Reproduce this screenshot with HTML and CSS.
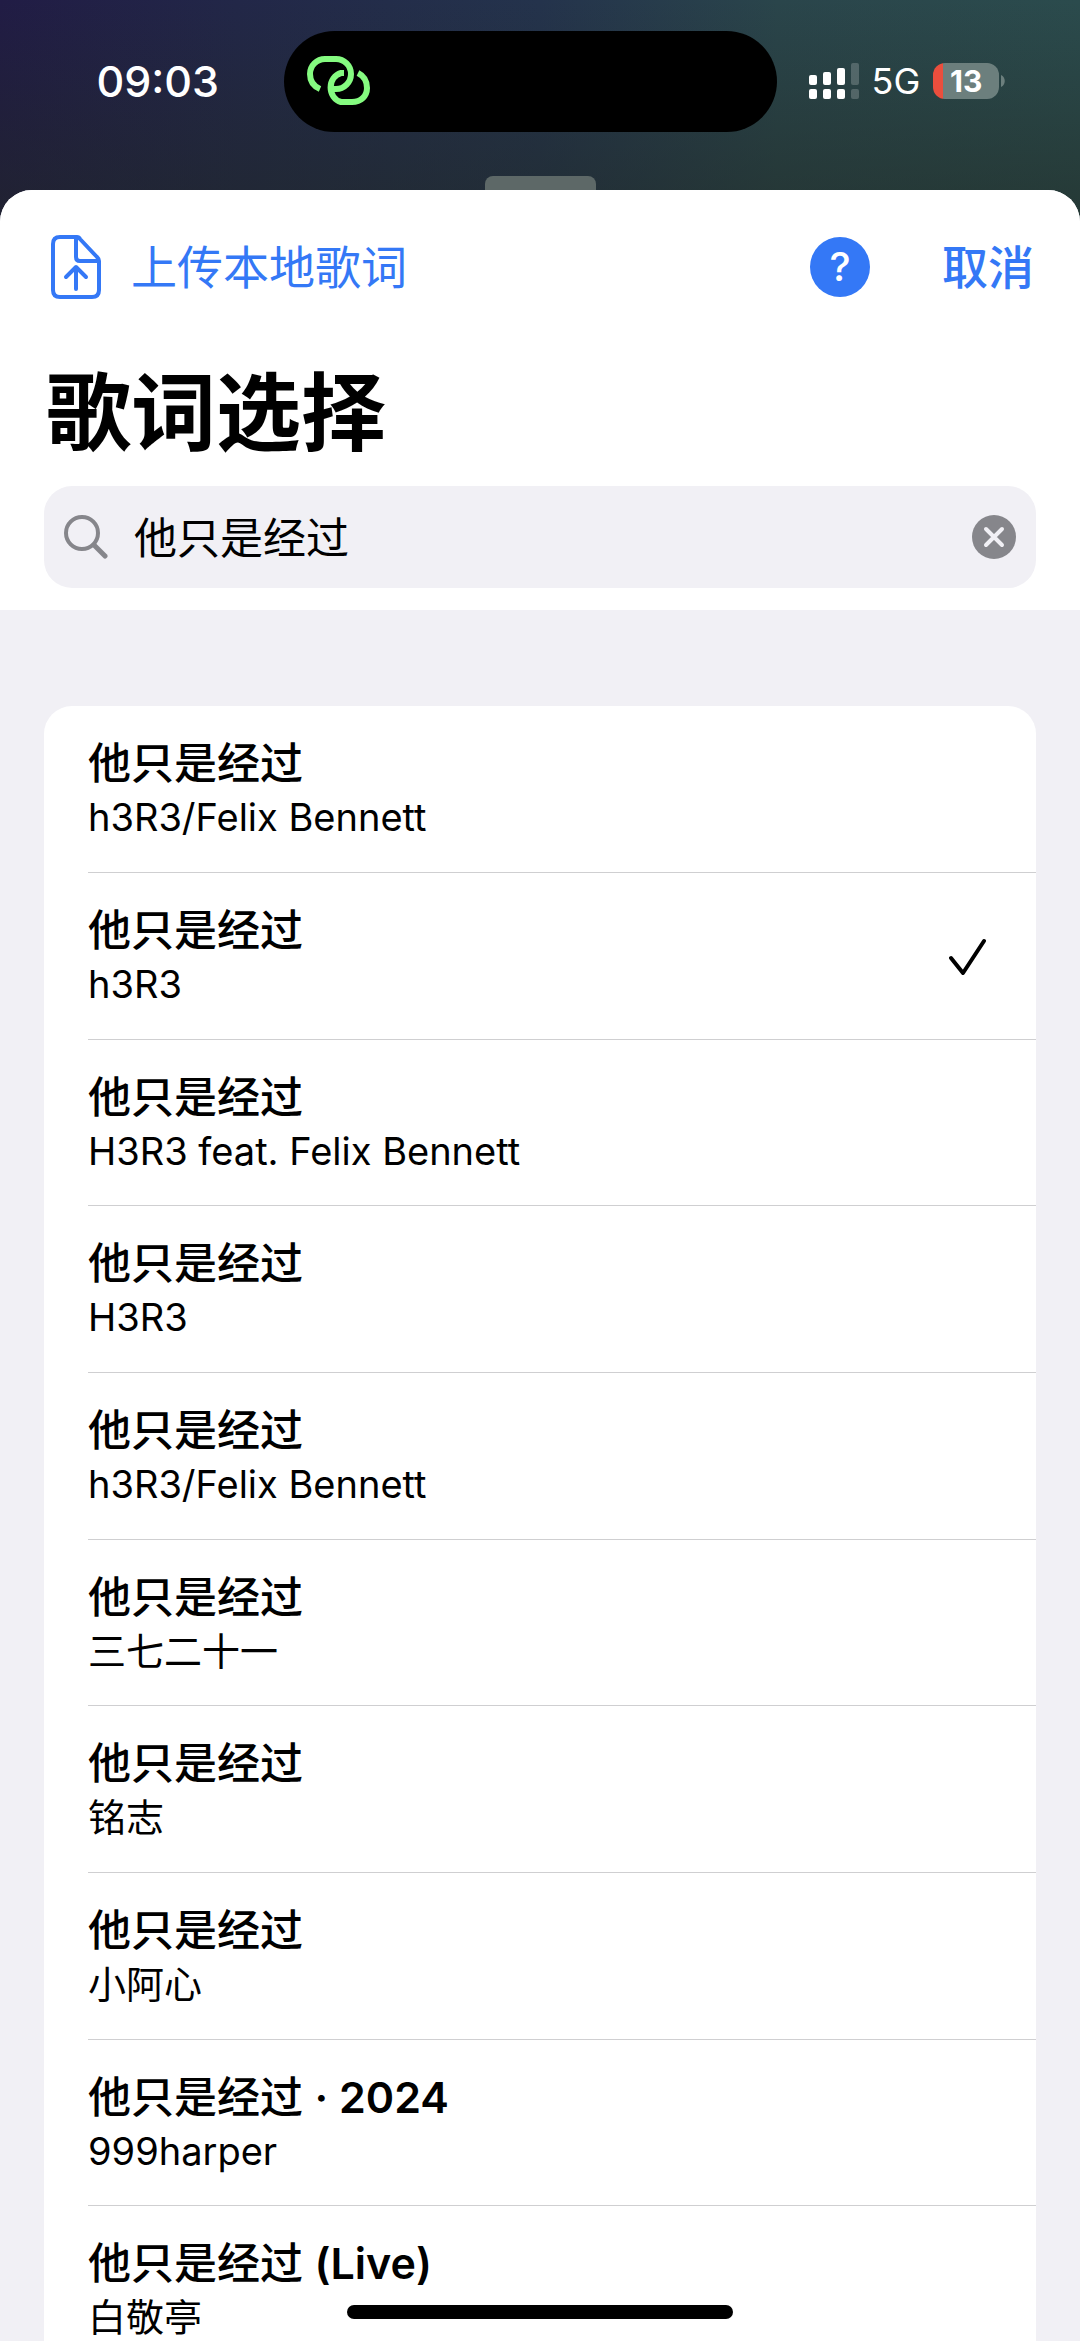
FILE: index.html
```html
<!DOCTYPE html>
<html lang="zh-CN">
<head>
    <meta charset="UTF-8">
    <meta name="viewport" content="width=device-width, initial-scale=1.0">
    <title>歌词选择</title>
    <link rel="stylesheet" href="styles.css">
</head>
<body>
    <div class="status-bar">
        <div class="time">09:03</div>
        <div class="island">
            <svg width="64" height="50" viewBox="0 0 64 50" fill="none" stroke="#85fb80" stroke-width="6">
                <path d="M13 33C6 30 3 24 3 18A15 15 0 0 1 18 3H29A15 15 0 0 1 29 33H26"/>
                <path d="M37 17H34A14 15 0 0 0 34 46H45C54 46 60 40 60 32C60 25 57 20 51 17"/>
            </svg>
        </div>
        <div class="status-right">
            <svg width="50" height="36" viewBox="0 0 50 36" fill="#fff">
                <rect x="0" y="12" width="8" height="10" rx="2"/>
                <rect x="14" y="9" width="8" height="13" rx="2"/>
                <rect x="28" y="5" width="8" height="17" rx="2"/>
                <rect x="42" y="0" width="8" height="22" rx="2" opacity="0.2"/>
                <rect x="0" y="26" width="8" height="10" rx="2"/>
                <rect x="14" y="26" width="8" height="10" rx="2"/>
                <rect x="28" y="26" width="8" height="10" rx="2"/>
                <rect x="42" y="26" width="8" height="10" rx="2" opacity="0.2"/>
            </svg>
            <span class="network">5G</span>
            <div class="battery">13</div>
            <svg class="battery-tip" width="4" height="12" viewBox="0 0 4 12" fill="#6c7f7d">
                <path d="M0 0C5 2 5 10 0 12Z"/>
            </svg>
        </div>
    </div>
    <div class="grabber"></div>

    <main class="sheet">
        <header class="sheet-header">
            <div class="toolbar">
                <button class="upload" type="button">
                    <svg width="50" height="64" viewBox="0 0 50 64" fill="none" stroke="currentColor" stroke-width="4" stroke-linecap="round" stroke-linejoin="round">
                        <path d="M26 2H9Q2 2 2 9V55Q2 62 9 62H41Q48 62 48 55V26Q48 24 46 22L29 4Q28 2 26 2Z"/>
                        <path d="M25 3V22Q25 26 29 26H47"/>
                        <path d="M25 54V33M15 42L25 32L35 42"/>
                    </svg>
                    <span>上传本地歌词</span>
                </button>
                <button class="help" type="button" aria-label="帮助">?</button>
                <button class="cancel" type="button">取消</button>
            </div>
            <h1>歌词选择</h1>
            <div class="search">
                <svg width="44" height="44" viewBox="0 0 44 44" fill="none" stroke="#86868b" stroke-linecap="round">
                    <circle cx="18" cy="18" r="16" stroke-width="4"/>
                    <path d="M30 30L41 41" stroke-width="5"/>
                </svg>
                <input type="text" value="他只是经过" aria-label="搜索歌词">
                <button class="clear" type="button" aria-label="清除">
                    <svg width="44" height="44" viewBox="0 0 44 44">
                        <circle cx="22" cy="22" r="22" fill="#86868b"/>
                        <path d="M14 14L30 30M30 14L14 30" stroke="#f1f0f5" stroke-width="4" stroke-linecap="round"/>
                    </svg>
                </button>
            </div>
        </header>

        <div class="results">
            <ul class="lyrics-list">
                <li><button class="lyric" type="button">
                    <span class="song">他只是经过</span>
                    <span class="artist">h3R3/Felix Bennett</span>
                </button></li>
                <li><button class="lyric" type="button" aria-pressed="true">
                    <span class="song">他只是经过</span>
                    <span class="artist">h3R3</span>
                    <svg class="check" width="38" height="38" viewBox="0 0 38 38" fill="none" stroke="#000" stroke-width="4" stroke-linecap="round" stroke-linejoin="round">
                        <path d="M2 20L14 35L35 3"/>
                    </svg>
                </button></li>
                <li><button class="lyric" type="button">
                    <span class="song">他只是经过</span>
                    <span class="artist">H3R3 feat. Felix Bennett</span>
                </button></li>
                <li><button class="lyric" type="button">
                    <span class="song">他只是经过</span>
                    <span class="artist">H3R3</span>
                </button></li>
                <li><button class="lyric" type="button">
                    <span class="song">他只是经过</span>
                    <span class="artist">h3R3/Felix Bennett</span>
                </button></li>
                <li><button class="lyric" type="button">
                    <span class="song">他只是经过</span>
                    <span class="artist">三七二十一</span>
                </button></li>
                <li><button class="lyric" type="button">
                    <span class="song">他只是经过</span>
                    <span class="artist">铭志</span>
                </button></li>
                <li><button class="lyric" type="button">
                    <span class="song">他只是经过</span>
                    <span class="artist">小阿心</span>
                </button></li>
                <li><button class="lyric" type="button">
                    <span class="song">他只是经过 <b>· 2024</b></span>
                    <span class="artist">999harper</span>
                </button></li>
                <li><button class="lyric" type="button">
                    <span class="song">他只是经过 <b>(Live)</b></span>
                    <span class="artist">白敬亭</span>
                </button></li>
            </ul>
        </div>
    </main>
    <div class="home-indicator"></div>
</body>
</html>
```
FILE: styles.css
```css
* {
    box-sizing: border-box;
}

body {
    margin: 0;
    height: 100vh;
    display: flex;
    flex-direction: column;
    font-family: Inter, "Noto Sans CJK SC", sans-serif;
    color: #000;
    background:
        linear-gradient(to bottom, rgba(32, 32, 32, 0) 0, rgba(32, 40, 32, 0.5) 210px),
        linear-gradient(to right, #211c45 0%, #222748 22%, #24334c 50%, #2a454b 72%, #2b4b4d 100%);
}

button {
    border: none;
    background: none;
    padding: 0;
    margin: 0;
    font-family: inherit;
    color: inherit;
    cursor: pointer;
}

svg {
    display: block;
    flex: none;
}

/* Barra de estado */
.status-bar {
    display: grid;
    grid-template-columns: 1fr 493px 1fr;
    align-items: center;
    height: 176px;
    padding: 0 20px 14px 0;
    color: #fff;
}

.time {
    padding-left: 32px;
    text-align: center;
    font-size: 43px;
    font-weight: 500;
}

.island {
    display: flex;
    align-items: center;
    height: 101px;
    padding-left: 23px;
    border-radius: 51px;
    background: #000;
}

.status-right {
    display: flex;
    align-items: center;
    padding-left: 32px;
}

.network {
    margin: 0 13px;
    font-size: 36px;
}

.battery {
    width: 66px;
    height: 36px;
    border-radius: 12px;
    background: linear-gradient(to right, #eb4e3d 10px, #6c7f7d 10px);
    font-size: 30px;
    font-weight: 700;
    line-height: 36px;
    text-align: center;
}

.battery-tip {
    margin-left: 2px;
}

.grabber {
    flex: none;
    align-self: center;
    width: 111px;
    height: 14px;
    border-radius: 8px 8px 0 0;
    background: #5d6867;
}

/* Hoja */
.sheet {
    flex: 1;
    min-height: 0;
    display: flex;
    flex-direction: column;
    overflow: hidden;
    border-radius: 32px 32px 0 0;
    background: #f1f0f5;
}

.sheet-header {
    padding: 44px 44px 22px;
    background: #fff;
}

.toolbar {
    display: flex;
    align-items: center;
    height: 66px;
    padding: 0 2px 0 7px;
    color: #3478f6;
}

.upload {
    display: flex;
    align-items: center;
    gap: 30px;
    margin-right: auto;
    font-size: 46px;
    line-height: 66px;
}

.help {
    width: 60px;
    height: 60px;
    margin-right: 72px;
    border-radius: 50%;
    background: #3478f6;
    color: #fff;
    font-size: 40px;
    font-weight: 500;
    line-height: 60px;
}

.cancel {
    font-size: 46px;
    font-weight: 500;
    line-height: 66px;
}

h1 {
    margin: 52px 0 10px;
    padding-left: 2px;
    font-size: 85px;
    font-weight: 700;
    line-height: 124px;
}

.search {
    display: flex;
    align-items: center;
    gap: 26px;
    height: 102px;
    padding: 0 20px;
    border-radius: 28px;
    background: #f1f0f5;
}

.search input {
    flex: 1;
    min-width: 0;
    padding: 0 0 4px;
    border: none;
    outline: none;
    background: none;
    font-family: inherit;
    font-size: 43px;
    color: #000;
}

/* Lista de resultados */
.results {
    flex: 1;
    min-height: 0;
    overflow-y: auto;
    scrollbar-width: none;
    padding: 96px 44px 44px;
}

.lyrics-list {
    margin: 0;
    padding: 0 0 0 44px;
    list-style: none;
    border-radius: 28px;
    background: #fff;
}

.lyrics-list li + li {
    border-top: 1px solid #cfcfd1;
}

.lyric {
    display: grid;
    grid-template-columns: 1fr auto;
    align-items: center;
    width: 100%;
    padding: 29px 49px 28px 0;
    text-align: left;
}

.lyrics-list li:nth-child(3n) .lyric {
    padding-bottom: 27px;
}

.song {
    font-size: 43px;
    font-weight: 500;
    line-height: 56px;
}

.song b {
    font-weight: 600;
}

.artist {
    grid-row: 2;
    font-size: 38px;
    line-height: 53px;
}

.check {
    grid-column: 2;
    grid-row: 1 / 3;
}

.home-indicator {
    position: fixed;
    left: 50%;
    bottom: 22px;
    width: 386px;
    height: 14px;
    border-radius: 7px;
    background: #000;
    transform: translateX(-50%);
}
```
